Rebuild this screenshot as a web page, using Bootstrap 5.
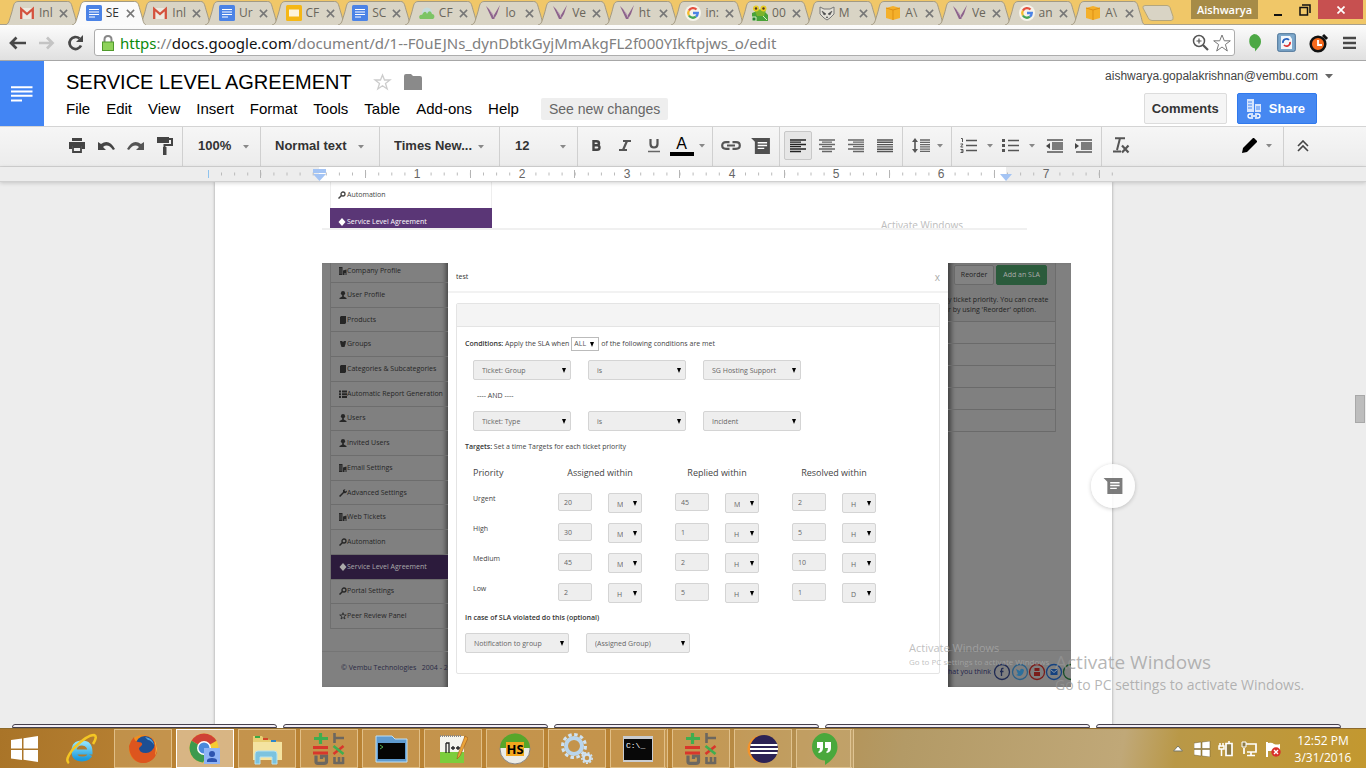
<!DOCTYPE html>
<html lang="en">
<head>
<meta charset="utf-8">
<meta name="viewport" content="width=device-width, initial-scale=1">
<title>SERVICE LEVEL AGREEMENT - Google Docs</title>
<link href="https://cdn.jsdelivr.net/npm/bootstrap@5.3.0/dist/css/bootstrap.min.css" rel="stylesheet">
<style>
:root{--ui:"Liberation Sans",Arial,sans-serif;--seg:"Open Sans","Noto Sans",sans-serif}
body{font-family:var(--ui);font-size:13px;line-height:1.2;color:#000;background:#ededed;height:100vh;overflow:hidden}
button,select,input{font:inherit;color:inherit}
.bare{border:0;background:none;padding:0;line-height:1;display:inline-flex;align-items:center;justify-content:center}
svg{display:block;flex:none}

/* browser tabs */
.tabstrip{height:25px;background:#f0c768;box-shadow:inset 0 -1px #a9a08a}
.tabs{padding-left:5px;min-width:0}
.btab{flex:1 1 0;min-width:0;height:24px;padding-left:14px;font-family:var(--seg);font-size:12px;color:#6a665b;margin-top:1px}
.btab .shape{position:absolute;left:0;top:0;width:calc(100% + 8px);height:24px;fill:#d9d4c5;stroke:#a39a83;stroke-width:1}
.btab.on{z-index:2;color:#333}
.btab.on .shape{fill:#fafafa}
.btab svg.fav,.btab .lbl,.btab .x{position:relative}
.btab .lbl{width:14px;margin-left:4px;overflow:hidden;white-space:nowrap;line-height:16px;text-align:left}
.btab .x{margin-left:6px}
.wctl{width:228px;padding-left:4px}
.who{background:#a68b47;color:#fff;font-family:var(--seg);font-size:11px;font-weight:600;width:67px;height:19px;margin-left:17px}
.wbtn{width:30px;height:19px}
.wclose{width:45px;height:19px;background:#c75050}

/* address bar */
.addr{height:36px;background:linear-gradient(#fcfcfc,#e0e0e0);border-bottom:1px solid #a7a7a7;padding:0 9px 0 8px}
.omni{height:27px;background:#fff;border:1px solid #adadad;border-radius:3px;padding:0 3px 0 6px;min-width:0}
.url{font-family:"Noto Sans","Open Sans",sans-serif;font-size:15px;line-height:24px;color:#808080;white-space:nowrap;overflow:hidden;outline:0}
.url b{font-weight:400;color:#0b8a0b}.url i{font-style:normal;color:#111}

/* document header */
.dochead{height:65px;background:#fff}
.home{width:44px;background:#4285f4}
.doctitle{font-size:20px;line-height:24px;margin:0;font-weight:400}
.menu{gap:16px;font-size:15px;line-height:20px}
.menu a{color:#000;text-decoration:none}
.changes{background:#eee;color:#666;border-radius:2px;padding:1px 8px;font-size:14px;line-height:20px;margin-left:6px}
.acct{font-size:12px;line-height:16px;color:#444}
.gbtn{height:31px;font-size:13px;font-weight:700;border-radius:2px;padding:0 7px}
.gbtn.cm{background:#f5f5f5;border:1px solid #dcdcdc;color:#333}
.gbtn.sh{background:#4688f1;border:1px solid #3079ed;color:#fff;gap:7px}

/* editing toolbar */
.tools{height:41px;background:linear-gradient(#f6f6f6,#ececec);border-top:1px solid #d4d4d4;border-bottom:1px solid #d4d4d4}
.grp{border-right:1px solid #d0d0d0;height:39px;display:flex;align-items:center;gap:1px;padding-left:4px;padding-bottom:2px}
.tb{width:28px;height:29px;border-radius:2px}
.tb.act{background:#e6e6e6;border:1px solid #c8c8c8}
.tb.wide{width:41px;gap:6px}
.tsel{appearance:none;border:0;background:no-repeat right 11px top 17px/6px 4px url("data:image/svg+xml,%3Csvg xmlns='http://www.w3.org/2000/svg' viewBox='0 0 6 4'%3E%3Cpath fill='%23888' d='M0 0h6L3 3.500z'/%3E%3C/svg%3E");font-weight:700;color:#333;height:36px;width:100%;padding:0 20px 0 0}
.gsel{padding-left:15px}

/* ruler */
.rule{height:15px;background:#ededed;border-bottom:1px solid #d0d0d0;padding-right:39px;box-shadow:0 1px 4px rgba(0,0,0,.18);position:relative;z-index:3}
.rule text{font:12px var(--ui);fill:#666;text-anchor:middle}

/* canvas */
.canvas{background:#ededed;padding-right:39px;min-height:0;overflow:hidden}
.sheet{width:897px;max-width:100%;background:#fff;padding-left:107px;box-shadow:0 0 3px rgba(0,0,0,.35)}
.fig{font-family:var(--seg);font-size:7px;line-height:10px;color:#444}
.fig1{width:705px;height:48px;border-bottom:2px solid #f0f0f0;padding-left:8px;overflow:hidden}
.fig1 .nav1{width:162px;border:1px solid #eee;border-top:0}
.nav1 div{height:26px;padding-left:7px;gap:1px}
.nav1 .cur{background:#5a3676;color:#fff;margin:0 -1px;padding-left:8px;height:28px}
.mark1{color:#bdbdbd;font-size:10px;line-height:14px;right:64px;top:36px}
.fig2{width:749px;height:424px;margin-top:33px;background:#808080}
.side{width:126px;padding-left:8px;color:#262626;overflow:hidden;white-space:nowrap;box-shadow:inset -5px 0 5px -3px rgba(0,0,0,.5)}
.side ul{list-style:none;margin:0;padding:0;border-left:1px solid #6f6f6f;height:366px}
.side li{flex:1 1 0;border-bottom:1px solid #6d6d6d;display:flex;align-items:center;padding-left:8px}
.side li:first-child{flex:0 0 20px;padding-bottom:4px}
.side li.cur{background:#2c1b3c;color:#aaa}
.side .foot{margin:22px 0 0 -8px;border-top:1px solid #757575;padding:11px 0 0 19px;color:#2a2a44}
.dlg{width:500px;background:#fff}
.dlg header{height:30px;border-bottom:2px solid #f2f2f2;padding:0 8px;color:#333}
.box{margin:10px 8px 0;height:371px;border:1px solid #e4e4e4;border-radius:2px;white-space:nowrap}
.boxhead{height:23px;background:#f4f4f4;border-bottom:1px solid #e4e4e4}
.box .in{padding-left:8px}
.box b{font-weight:600;color:#333}
.dd,.num{border:1px solid #d4d4d4;border-radius:2px;background-color:#eee;color:#666;height:20px;font-size:7px;line-height:10px;padding:2px 8px 0;opacity:1}
.dd{appearance:none;background-repeat:no-repeat;background-position:right 4px top 7px;background-size:4px 5px;background-image:url("data:image/svg+xml,%3Csvg xmlns='http://www.w3.org/2000/svg' viewBox='0 0 4 5'%3E%3Cpath fill='%23000' d='M0 0h4L2 5z'/%3E%3C/svg%3E")}
.dd.s1{width:98px}.dd.s2{width:104px}
.dd.all{width:28px;height:14px;background-color:#fff;padding:0 2px;background-position:right 4px top 4px;color:#555;border-color:#bbb;border-radius:0}
.dd.unit{width:34px;padding:3px 18px 0 8px}
.num{width:34px;height:18px;padding:0 5px}
.tg{table-layout:fixed;width:436px;border-collapse:collapse;margin:15px 0 0 8px}
.tg th{font-weight:400;font-size:9px;line-height:12px;padding:0 33px 9px 0;text-align:center;color:#444}
.tg th:first-child{text-align:left;padding-right:0}
.tg td{padding:0;height:30px;vertical-align:middle}
.tg td:first-child{padding-bottom:9px}
.tg .pair{display:flex;gap:16px}
.rest{width:123px;overflow:hidden;color:#222;white-space:nowrap;box-shadow:inset 6px 0 5px -3px rgba(0,0,0,.5)}
.rt{width:108px;border-right:1px solid #6d6d6d}
.rt .hd{height:58px;padding-top:2px;background:rgba(0,0,0,.04)}
.rt .ln{height:22px;border-top:1px solid #6a6a6a}
.mb{font-size:7px;height:20px;border-radius:2px;padding:0 6px}
.social{margin-top:218px;border-top:1px solid #757575;padding:12px 0 0;gap:1px;color:#22224a}
.wm{color:rgba(170,170,170,.75);left:587px;top:377px;font-size:11px;line-height:15px}
.wm small{display:block;font-size:8px;line-height:14px}

.bubble{width:44px;height:44px;border-radius:50%;background:rgba(255,255,255,.88);box-shadow:0 1px 4px rgba(0,0,0,.2);right:231px;top:282px}
.thumb{width:10px;height:28px;background:#bdbdbd;border:1px solid #a8a8a8;right:1px;top:213px}
.peeks{left:12px;right:25px;bottom:0;gap:6px}
.peeks div{flex:1 1 265px;height:4px;border:1px solid #45404c;border-radius:3px 3px 0 0;background:#f3eff6}
.peeks div:last-child{flex-basis:245px}
.actwin{right:56px;top:467px;width:255px;font-family:var(--seg);color:rgba(150,150,150,.7);font-size:19px;line-height:26px;white-space:nowrap;z-index:5}
.actwin span{display:block;font-size:14px;line-height:20px}

/* taskbar */
.task{height:40px;background:linear-gradient(100deg,#a97428 0,#b98234 12%,#b98334 48%,#b39a66 66%,#c0a878 82%,#b99847 86%,#c3982f 100%);border-top:1px solid #8d6a2c;gap:4px;font-family:var(--seg);color:#fff}
.app{width:58px;height:39px;background:rgba(225,195,145,.27);border:1px solid rgba(245,220,175,.6)}
.app.on{background:rgba(255,245,230,.45);border-color:#fff}
.app.stack{border-right:4px double rgba(245,220,175,.6)}
.clock{font-size:12px;line-height:17px;width:60px}
</style>
</head>
<body class="d-flex flex-column">
<svg width="0" height="0" class="position-absolute">
<defs>
<linearGradient id="fxg" x1="0" y1="0" x2="1" y2="1"><stop offset="0" stop-color="#f8a01c"/><stop offset="1" stop-color="#d8431d"/></linearGradient>
<linearGradient id="ieg" x1="0" y1="0" x2="0" y2="1"><stop offset="0" stop-color="#8be0fb"/><stop offset="1" stop-color="#1c9bdc"/></linearGradient>
</defs>
<symbol id="tab" viewBox="0 0 75 24" preserveAspectRatio="none"><path vector-effect="non-scaling-stroke" d="M0 24C4 23 4 20 6 14C9 5 8 1 13 .5H63C67 .5 67 5 69 11C72 20 71 23 75 24"/></symbol>
<symbol id="x" viewBox="0 0 10 10"><path d="M1 1l8 8M9 1L1 9" stroke="#777" stroke-width="1.700"/></symbol>
<symbol id="f-gm" viewBox="0 0 16 16"><path d="M1 3h14v11H1z" fill="#ede9df"/><path d="M2.200 14V4L8 9l5.800-5v10" fill="none" stroke="#d4523d" stroke-width="2.300"/></symbol>
<symbol id="f-doc" viewBox="0 0 16 16"><rect width="16" height="16" rx="1.500" fill="#4b83e6"/><path d="M3 4.500h10M3 7h10M3 9.500h10M3 12h6" stroke="#fff" stroke-width="1.200"/></symbol>
<symbol id="f-sl" viewBox="0 0 16 16"><rect width="16" height="16" rx="1.500" fill="#f5b715"/><path d="M3 4.500h10v7H3z" fill="#fdf4dc"/></symbol>
<symbol id="f-an" viewBox="0 0 16 16"><ellipse cx="8" cy="8" rx="5" ry="5.500" fill="#c5dcdc"/><path d="M1 14c-2-2 0-5 2-4 2-4 4-4 5-1 2-4 4-3 5 0 3 0 3 4 1 5z" fill="#7cc464"/></symbol>
<symbol id="f-v" viewBox="0 0 16 16"><path d="M1 1l6 13h3L4 4zM9 10L15 0l-3 9-3 5z" fill="#8d638c"/><path d="M4 4l4 5 2 5z" fill="#b89ab5"/></symbol>
<symbol id="f-g" viewBox="0 0 16 16"><circle cx="8" cy="8" r="8" fill="#f6f3ea"/><g fill="none" stroke-width="2.300"><path d="M11.500 4.500A4.800 4.800 0 0 0 3.900 5.600" stroke="#e5503f"/><path d="M3.900 5.600a4.800 4.800 0 0 0 0 4.900" stroke="#f5bb2a"/><path d="M3.900 10.500a4.800 4.800 0 0 0 7 1.200" stroke="#43a556"/><path d="M10.900 11.700A4.800 4.800 0 0 0 12.800 8H8" stroke="#4b83e6"/></g></symbol>
<symbol id="f-fr" viewBox="0 0 16 16"><path d="M0 8l5-2h7l4 4v6H0z" fill="#49a339"/><path d="M2 4l12 1-2 6H5z" fill="#7db32c"/><circle cx="4" cy="3.500" r="3" fill="#e7cd25"/><circle cx="11.500" cy="3.500" r="3" fill="#e7cd25"/><circle cx="4" cy="3.500" r="1.200" fill="#532"/><circle cx="11.500" cy="3.500" r="1.200" fill="#532"/><path d="M0 12h4v4H0zM11 11l4 4" fill="#267f32" stroke="#d8eec4"/></symbol>
<symbol id="f-rc" viewBox="0 0 16 16"><path d="M1 2l4 2h6l4-2v7l-4 4-3 2-3-2-4-4z" fill="#e4e1d8" stroke="#777"/><path d="M3 6l4 3-2 1zM13 6L9 9l2 1zM7 12h2l-1 1z" fill="#444" stroke="#555" stroke-width=".6"/></symbol>
<symbol id="f-aw" viewBox="0 0 16 16"><path d="M1 3l7-2 7 2v10l-7 2-7-2z" fill="#f4b02b"/><path d="M1 3l7 2 7-2M8 5v10" stroke="#dd8f14" fill="none"/></symbol>
<symbol id="dn" viewBox="0 0 6 4"><path d="M0 0h6L3 3.500z" fill="#888"/></symbol>
<symbol id="cmt" viewBox="0 0 20 17"><path d="M0 0h20v17H4V4z" fill="#505050"/><path d="M7 5h10M7 8h10M7 11h7" stroke="#fff" stroke-width="1.500"/></symbol>
<symbol id="bld" viewBox="0 0 8 8"><path d="M0 0h3.500v8H0zM4 3.500l3.500-1V8H6.500V6H5.500v2H4z" fill="currentColor"/><path d="M0 2h3M0 4h3M0 6h3" stroke="#808080" stroke-width=".5"/></symbol>
<symbol id="usr" viewBox="0 0 8 8"><circle cx="4" cy="2.200" r="2.100" fill="currentColor"/><path d="M3.200 4h1.600v1.500L7.500 7v1h-7V7l2.700-1.500z" fill="currentColor"/></symbol>
<symbol id="bok" viewBox="0 0 8 8"><path d="M1 1l1-1h5v7L6 8H1z" fill="currentColor"/></symbol>
<symbol id="grpi" viewBox="0 0 8 8"><path d="M1 1h2l1 1 1-1h2l-.5 3L5.500 7h-3L1.500 4z" fill="currentColor"/></symbol>
<symbol id="lst" viewBox="0 0 8 8"><path d="M0 .500h2v2H0zM3 .500h5v2H3zM0 3.200h2v2H0zM3 3.200h5v2H3zM0 6h2v2H0zM3 6h5v2H3z" fill="currentColor"/></symbol>
<symbol id="wr" viewBox="0 0 8 8"><path d="M0 7l4-4V1L6.500 0 5.500 1.500l1 1L8 1.500C8 4 6.500 4.600 5 4L1.200 8z" fill="currentColor"/></symbol>
<symbol id="key" viewBox="0 0 8 8"><circle cx="5" cy="3" r="2" fill="none" stroke="currentColor" stroke-width="1.300"/><path d="M3.500 4.500L.5 7.500" stroke="currentColor" stroke-width="1.500"/></symbol>
<symbol id="dia" viewBox="0 0 8 8"><path d="M4 0l3.500 4L4 8 .5 4z" fill="currentColor"/></symbol>
<symbol id="str" viewBox="0 0 8 8"><path d="M4 .7l.8 2.300h2.500L5.300 4.500 6 7 4 5.500 2 7l.7-2.500L.7 3h2.500z" fill="none" stroke="currentColor" stroke-width=".8"/></symbol>
<symbol id="gitx" viewBox="0 0 32 32"><g fill="none" stroke-width="3.200"><path d="M3 22.500v6q0 1.800 2 1.800h6q2.500 0 2.500-1.800v-5.500H8.500v3" stroke="#6c675f"/><path d="M0 20h15M0 14.500h15" stroke="#d9362b"/><path d="M7.500 0v11M1 5.500h14" stroke="#3fae4f"/></g><g fill="none" stroke-width="2.600"><path d="M21.500 31V24M21.500 30h9M26 30v-6M30 31v-7" stroke="#6c675f"/><path d="M20.500 21l10-8" stroke="#d9362b"/><path d="M20.500 13l10 8" stroke="#3fae4f"/><path d="M21.500 0v10M21 5h10" stroke="#6c675f"/></g></symbol>
</svg>

<div class="tabstrip d-flex">
  <div class="tabs d-flex flex-fill" role="tablist">
    <button class="btab bare justify-content-start position-relative" role="tab"><svg class="shape"><use href="#tab"/></svg><svg class="fav" width="16" height="16"><use href="#f-gm"/></svg><span class="lbl">Inl</span><svg class="x" width="9" height="9"><use href="#x"/></svg></button>
    <button class="btab on bare justify-content-start position-relative" role="tab"><svg class="shape"><use href="#tab"/></svg><svg class="fav" width="16" height="16"><use href="#f-doc"/></svg><span class="lbl">SE</span><svg class="x" width="9" height="9"><use href="#x"/></svg></button>
    <button class="btab bare justify-content-start position-relative" role="tab"><svg class="shape"><use href="#tab"/></svg><svg class="fav" width="16" height="16"><use href="#f-gm"/></svg><span class="lbl">Inl</span><svg class="x" width="9" height="9"><use href="#x"/></svg></button>
    <button class="btab bare justify-content-start position-relative" role="tab"><svg class="shape"><use href="#tab"/></svg><svg class="fav" width="16" height="16"><use href="#f-doc"/></svg><span class="lbl">Ur</span><svg class="x" width="9" height="9"><use href="#x"/></svg></button>
    <button class="btab bare justify-content-start position-relative" role="tab"><svg class="shape"><use href="#tab"/></svg><svg class="fav" width="16" height="16"><use href="#f-sl"/></svg><span class="lbl">CF</span><svg class="x" width="9" height="9"><use href="#x"/></svg></button>
    <button class="btab bare justify-content-start position-relative" role="tab"><svg class="shape"><use href="#tab"/></svg><svg class="fav" width="16" height="16"><use href="#f-doc"/></svg><span class="lbl">SC</span><svg class="x" width="9" height="9"><use href="#x"/></svg></button>
    <button class="btab bare justify-content-start position-relative" role="tab"><svg class="shape"><use href="#tab"/></svg><svg class="fav" width="16" height="16"><use href="#f-an"/></svg><span class="lbl">CF</span><svg class="x" width="9" height="9"><use href="#x"/></svg></button>
    <button class="btab bare justify-content-start position-relative" role="tab"><svg class="shape"><use href="#tab"/></svg><svg class="fav" width="16" height="16"><use href="#f-v"/></svg><span class="lbl">lo</span><svg class="x" width="9" height="9"><use href="#x"/></svg></button>
    <button class="btab bare justify-content-start position-relative" role="tab"><svg class="shape"><use href="#tab"/></svg><svg class="fav" width="16" height="16"><use href="#f-v"/></svg><span class="lbl">Ve</span><svg class="x" width="9" height="9"><use href="#x"/></svg></button>
    <button class="btab bare justify-content-start position-relative" role="tab"><svg class="shape"><use href="#tab"/></svg><svg class="fav" width="16" height="16"><use href="#f-v"/></svg><span class="lbl">ht</span><svg class="x" width="9" height="9"><use href="#x"/></svg></button>
    <button class="btab bare justify-content-start position-relative" role="tab"><svg class="shape"><use href="#tab"/></svg><svg class="fav" width="16" height="16"><use href="#f-g"/></svg><span class="lbl">in:</span><svg class="x" width="9" height="9"><use href="#x"/></svg></button>
    <button class="btab bare justify-content-start position-relative" role="tab"><svg class="shape"><use href="#tab"/></svg><svg class="fav" width="16" height="16"><use href="#f-fr"/></svg><span class="lbl">00</span><svg class="x" width="9" height="9"><use href="#x"/></svg></button>
    <button class="btab bare justify-content-start position-relative" role="tab"><svg class="shape"><use href="#tab"/></svg><svg class="fav" width="16" height="16"><use href="#f-rc"/></svg><span class="lbl">M</span><svg class="x" width="9" height="9"><use href="#x"/></svg></button>
    <button class="btab bare justify-content-start position-relative" role="tab"><svg class="shape"><use href="#tab"/></svg><svg class="fav" width="16" height="16"><use href="#f-aw"/></svg><span class="lbl">A\</span><svg class="x" width="9" height="9"><use href="#x"/></svg></button>
    <button class="btab bare justify-content-start position-relative" role="tab"><svg class="shape"><use href="#tab"/></svg><svg class="fav" width="16" height="16"><use href="#f-v"/></svg><span class="lbl">Ve</span><svg class="x" width="9" height="9"><use href="#x"/></svg></button>
    <button class="btab bare justify-content-start position-relative" role="tab"><svg class="shape"><use href="#tab"/></svg><svg class="fav" width="16" height="16"><use href="#f-g"/></svg><span class="lbl">an</span><svg class="x" width="9" height="9"><use href="#x"/></svg></button>
    <button class="btab bare justify-content-start position-relative" role="tab"><svg class="shape"><use href="#tab"/></svg><svg class="fav" width="16" height="16"><use href="#f-aw"/></svg><span class="lbl">A\</span><svg class="x" width="9" height="9"><use href="#x"/></svg></button>
  </div>
  <div class="wctl d-flex flex-shrink-0">
    <button class="bare align-self-center" aria-label="New tab"><svg width="32" height="16"><path d="M3 .5h22q2 0 3 2l3 9q1 4-2 4H10q-3 0-4-3L1 3q-1-2 2-2.500z" fill="#d9d4c5" stroke="#b3a67e"/></svg></button>
    <button class="who bare">Aishwarya</button>
    <button class="wbtn bare ms-1" aria-label="Minimize"><svg width="12" height="12"><path d="M3 11h8" stroke="#111" stroke-width="2"/></svg></button>
    <button class="wbtn bare" style="width:26px" aria-label="Restore"><svg width="12" height="12"><path d="M1 3.500h7.500V11H1z M3 1h8v8" fill="none" stroke="#111" stroke-width="1.500"/></svg></button>
    <button class="wclose bare" aria-label="Close"><svg width="8" height="8"><path d="M.5.5l7 7M7.500.5l-7 7" stroke="#fff" stroke-width="1.700"/></svg></button>
  </div>
</div>

<div class="addr d-flex align-items-center">
  <button class="bare" aria-label="Back"><svg width="20" height="16"><path d="M3 8h15M8.500 2.500L3 8l5.500 5.500" fill="none" stroke="#484848" stroke-width="2.700"/></svg></button>
  <button class="bare" style="margin-left:10px" aria-label="Forward"><svg width="18" height="16"><path d="M1 8h13M9 2.500L14.500 8 9 13.500" fill="none" stroke="#c4c4c4" stroke-width="2.700"/></svg></button>
  <button class="bare me-2 ms-2" aria-label="Reload"><svg width="22" height="18"><path d="M17 11.500A6 6 0 1 1 15.500 4.500" fill="none" stroke="#484848" stroke-width="2.700"/><path d="M19 1v7h-7z" fill="#484848"/></svg></button>
  <div class="omni d-flex align-items-center flex-fill">
    <svg style="margin-right:5px" width="14" height="16"><path d="M3.500 8V4.500q0-3.500 3.500-3.500t3.500 3.500V8" fill="none" stroke="#888" stroke-width="2"/><rect x="1.500" y="7" width="11" height="8.500" fill="#8fd25b" stroke="#4f9a2b"/></svg>
    <div class="url flex-fill" role="textbox" contenteditable="true" spellcheck="false" aria-label="Address"><b>https</b>://<i>docs.google.com</i>/document/d/1--F0uEJNs_dynDbtkGyjMmAkgFL2f000YIkftpjws_o/edit</div>
    <svg width="17" height="17"><circle cx="7" cy="7" r="5.500" fill="none" stroke="#555" stroke-width="1.500"/><path d="M4.500 7h5M7 4.500v5" stroke="#555" stroke-width="1.200"/><path d="M11 11l5 5" stroke="#555" stroke-width="2.200"/></svg>
    <svg class="ms-1" width="18" height="18" viewBox="0 0 18 18"><path d="M9 1l2.300 5.800h6L12.400 10.500 14.300 17 9 13l-5.300 4 1.900-6.500L.7 6.800h6z" fill="#fff" stroke="#777"/></svg>
  </div>
  <svg class="ms-2" style="margin-right:12px" width="22" height="20"><path d="M11 1a7 7.500 0 0 1 7 7.500c0 5-4 7-6 10v-3a7 7.500 0 0 1-1-14.500z" fill="#4da845"/></svg>
  <svg width="19" height="19"><rect x=".7" y=".7" width="17.600" height="17.600" rx="1.500" fill="#7fa9cc" stroke="#456f95"/><path d="M4 3h9l2 3v10H4z" fill="#f4f8fc"/><path d="M6 10a3.500 3.500 0 0 1 6-3" fill="none" stroke="#2862bd" stroke-width="1.800"/><path d="M13 9a3.500 3.500 0 0 1-6 3" fill="none" stroke="#d33" stroke-width="1.800"/></svg>
  <svg style="margin-left:13px" width="20" height="20"><circle cx="9" cy="11" r="7.300" fill="#f6691d" stroke="#111" stroke-width="2.500"/><path d="M9 7v5h4" fill="none" stroke="#fff" stroke-width="1.800"/><path d="M14 2l4 4" stroke="#111" stroke-width="3"/></svg>
  <button class="bare" style="margin-left:14px" aria-label="Menu"><svg width="14" height="13"><path d="M0 2h13M0 7h13M0 12h13" stroke="#484848" stroke-width="2.700"/></svg></button>
</div>

<header class="dochead d-flex">
  <a class="home d-flex align-items-center justify-content-center" href="#" aria-label="Docs home"><svg width="22" height="16"><path d="M0 1.200h21.500M0 5.400h21.500M0 9.800h21.500M0 14.500h11" stroke="#fff" stroke-width="2"/></svg></a>
  <div class="flex-fill" style="padding:9px 0 0 22px">
    <div class="d-flex align-items-center">
      <h1 class="doctitle">SERVICE LEVEL AGREEMENT</h1>
      <button class="bare" style="margin-left:21px" aria-label="Star"><svg width="19" height="18" viewBox="0 0 18 18"><path d="M9 2l2 5h5.500L12 10.500l1.700 5.500L9 12.700 4.300 16 6 10.500 1.500 7H7z" fill="none" stroke="#ccc" stroke-width="1.300"/></svg></button>
      <button class="bare" style="margin-left:12px" aria-label="Move"><svg width="18" height="16"><path d="M0 2q0-2 2-2h5l2 2h7q2 0 2 2v12H0z" fill="#8a8a8a"/></svg></button>
    </div>
    <nav class="menu d-flex align-items-center" style="padding-top:4px">
      <a href="#">File</a><a href="#">Edit</a><a href="#">View</a><a href="#">Insert</a><a href="#">Format</a><a href="#">Tools</a><a href="#">Table</a><a href="#">Add-ons</a><a href="#">Help</a><button class="changes border-0">See new changes</button>
    </nav>
  </div>
  <div class="d-flex flex-column align-items-end" style="padding:7px 33px 0 0">
    <button class="acct bare">aishwarya.gopalakrishnan@vembu.com<svg style="margin-left:7px" width="8" height="5"><path d="M0 0h8L4 4.500z" fill="#666"/></svg></button>
    <div class="d-flex" style="gap:10px;padding:9px 16px 0 0">
      <button class="gbtn cm">Comments</button>
      <button class="gbtn sh d-flex align-items-center" style="padding:0 11px 0 8px"><svg width="16" height="20"><path d="M1 0h7v13H1zM9 5h6v8H9z" fill="#d7e5fd"/><path d="M2 3h4M2 6h4M2 9h4M11 7v4M13 7v4" stroke="#4688f1"/><path d="M7 15H4q-2 0-2 2t2 2h3M9 15h3q2 0 2 2t-2 2H9M5 17h6" fill="none" stroke="#fff" stroke-width="1.300"/></svg>Share</button>
    </div>
  </div>
</header>

<div class="tools d-flex" role="toolbar">
  <div class="grp" style="padding-left:63px;width:183px">
    <button class="tb bare" aria-label="Print"><svg width="16" height="15"><path d="M3 0h10v3H3zM0 4h16v7h-3V8H3v3H0z" fill="#444"/><path d="M4 9h8v5H4z" fill="none" stroke="#444" stroke-width="1.800"/></svg></button>
    <button class="tb bare" aria-label="Undo"><svg width="17" height="11"><path d="M0 2v8h8L5 7q5-4 10 3l2-1Q11-2 3 4z" fill="#444"/></svg></button>
    <button class="tb bare" aria-label="Redo"><svg width="17" height="11"><path d="M17 2v8H9l3-3q-5-4-10 3L0 9Q6-2 14 4z" fill="#555"/></svg></button>
    <button class="tb bare" aria-label="Paint format"><svg width="17" height="18"><path d="M1 0h12v6H1z" fill="#444"/><path d="M13 2h3v6H8.500v9" fill="none" stroke="#444" stroke-width="2"/><path d="M7 10h3.500v8H7z" fill="#444"/></svg></button>
  </div>
  <div class="grp gsel" style="width:78px"><select class="tsel" aria-label="Zoom"><option>100%</option></select></div>
  <div class="grp gsel" style="width:119px;padding-left:14px"><select class="tsel" style="background-position:right 15px top 17px" aria-label="Styles"><option>Normal text</option></select></div>
  <div class="grp gsel" style="width:120px;padding-left:14px"><select class="tsel" style="background-position:right 15px top 17px" aria-label="Font"><option>Times New...</option></select></div>
  <div class="grp gsel" style="width:78px"><select class="tsel" aria-label="Font size"><option>12</option></select></div>
  <div class="grp" style="width:135px">
    <button class="tb bare" aria-label="Bold"><svg width="10" height="11"><path d="M2.500 1.200h3q2.500 0 2.500 2t-2.500 2h-3zM2.500 5.200H6q2.500 0 2.500 2.300T6 9.800H2.500z" fill="none" stroke="#444" stroke-width="2.400"/></svg></button>
    <button class="tb bare" aria-label="Italic"><svg width="12" height="11"><path d="M4 1h8M0 10h8M8 1L4 10" stroke="#555" stroke-width="2.200"/></svg></button>
    <button class="tb bare" aria-label="Underline"><svg width="12" height="14"><path d="M2.500 0v5q0 3.500 3.500 3.500T9.500 5V0" fill="none" stroke="#555" stroke-width="2.200"/><path d="M0 12.500h12" stroke="#666" stroke-width="1.500"/></svg></button>
    <button class="tb bare wide" style="width:36px;gap:5px" aria-label="Text color"><span class="d-flex flex-column align-items-center" style="font-size:16px;line-height:16px">A<svg width="24" height="4"><path d="M0 0h24v4H0z"/></svg></span><svg width="6" height="4"><use href="#dn"/></svg></button>
  </div>
  <div class="grp" style="width:67px">
    <button class="tb bare" aria-label="Link"><svg width="20" height="9"><path d="M8.500 1.200H5Q1.200 1.200 1.200 4.500T5 7.800h3.500M11.500 1.200H15q3.800 0 3.800 3.300T15 7.800h-3.500M6 4.500h8" fill="none" stroke="#555" stroke-width="2.200"/></svg></button>
    <button class="tb bare" aria-label="Comment"><svg width="19" height="16"><use href="#cmt"/></svg></button>
  </div>
  <div class="grp" style="width:123px">
    <button class="tb bare act" aria-label="Left"><svg width="16" height="14"><path d="M0 1h16M0 5.500h16M0 10h16M0 3.200h11M0 7.700h11M0 12.500h11" stroke="#222" stroke-width="1.300"/></svg></button>
    <button class="tb bare" aria-label="Center"><svg width="16" height="14"><path d="M0 1h16M0 5.500h16M0 10h16M3 3.200h10M3 7.700h10M3 12.500h10" stroke="#666" stroke-width="1.300"/></svg></button>
    <button class="tb bare" aria-label="Right"><svg width="16" height="14"><path d="M0 1h16M0 5.500h16M0 10h16M5 3.200h11M5 7.700h11M5 12.500h11" stroke="#666" stroke-width="1.300"/></svg></button>
    <button class="tb bare" aria-label="Justify"><svg width="16" height="14"><path d="M0 1h16M0 3.300h16M0 5.600h16M0 7.900h16M0 10.200h16M0 12.500h16" stroke="#555" stroke-width="1.400"/></svg></button>
  </div>
  <div class="grp" style="width:49px"><button class="tb bare wide" aria-label="Line spacing"><svg width="19" height="15"><path d="M3 2v11" stroke="#555" stroke-width="1.600"/><path d="M3 0l3 4H0zM3 15l3-4H0z" fill="#555"/><path d="M8 2h10M8 4.300h10M8 6.600h10M8 8.900h10M8 11.200h10M8 13.300h10" stroke="#666" stroke-width="1.300"/></svg><svg width="6" height="4"><use href="#dn"/></svg></button></div>
  <div class="grp" style="width:150px">
    <button class="tb bare wide" style="gap:10px" aria-label="Numbered list"><svg width="17" height="15"><path d="M6 2.500h11M6 7.500h11M6 12.500h11" stroke="#555" stroke-width="1.500"/><path d="M1 .500h1.500V4M.5 6H3L.7 9H3.200M.5 11.500H3v3H.5M1 13h2" fill="none" stroke="#555"/></svg><svg width="6" height="4"><use href="#dn"/></svg></button>
    <button class="tb bare wide" style="gap:10px" aria-label="Bulleted list"><svg width="17" height="15"><path d="M6 2.500h11M6 7.500h11M6 12.500h11" stroke="#555" stroke-width="1.500"/><path d="M0 1h3v3H0zM0 6h3v3H0zM0 11h3v3H0z" fill="#555"/></svg><svg width="6" height="4"><use href="#dn"/></svg></button>
    <button class="tb bare" aria-label="Decrease indent"><svg width="17" height="14"><path d="M1 1h16M6 4h11M6 6h11M6 8h11M6 10h11M1 13h16" stroke="#555" stroke-width="1.300"/><path d="M4 4v6L0 7z" fill="#444"/></svg></button>
    <button class="tb bare" aria-label="Increase indent"><svg width="17" height="14"><path d="M1 1h16M6 4h11M6 6h11M6 8h11M6 10h11M1 13h16" stroke="#555" stroke-width="1.300"/><path d="M0 4v6l4-3z" fill="#444"/></svg></button>
  </div>
  <div class="grp border-0" style="padding-left:5px"><button class="tb bare" aria-label="Clear formatting"><svg width="18" height="17"><path d="M3 1.200h10M8 1.200L5 13M1 14.500h8" stroke="#555" stroke-width="2"/><path d="M10 8.500l6.500 7M16.500 8.500l-6.500 7" stroke="#555" stroke-width="2.200"/></svg></button></div>
  <div class="grp ms-auto" style="width:52px"><button class="tb bare wide" style="gap:9px" aria-label="Mode"><svg width="15" height="15"><path d="M0 15l1-5L11 0h1l3 3v1L5 14z"/></svg><svg width="6" height="4"><use href="#dn"/></svg></button></div>
  <div class="grp border-0" style="width:82px;padding-left:5px"><button class="tb bare" aria-label="Hide menus"><svg width="12" height="12"><path d="M1 6l5-5 5 5M1 11l5-5 5 5" fill="none" stroke="#444" stroke-width="1.600"/></svg></button></div>
</div>

<div class="rule d-flex justify-content-center">
  <svg width="911" height="14" viewBox="0 0 911 14">
    <path d="M111 0h687v14H111z" fill="#fff"/>
    <path d="M0.500 3v8" stroke="#8fc3ee"/>
    <path d="M13 7h900" stroke="#bbb" stroke-width="3" stroke-dasharray="1 12.100"/>
    <path d="M52.500 3v8M157.500 3v8M262.500 3v8M366.500 3v8M471.500 3v8M576.500 3v8M681.500 3v8M786.500 3v8M891.500 3v8" stroke="#b5b5b5"/>
    <g><path d="M203 1h12v12h-12zM308 1h12v12h-12zM413 1h12v12h-12zM518 1h12v12h-12zM623 1h12v12h-12zM727 1h12v12h-12z" fill="#fff"/><path d="M832 1h12v12h-12z" fill="#ededed"/><text x="209" y="11">1</text><text x="314" y="11">2</text><text x="419" y="11">3</text><text x="524" y="11">4</text><text x="628" y="11">5</text><text x="733" y="11">6</text><text x="838" y="11">7</text></g>
    <path d="M105 2h13v4h-13zM105 7h13l-6.500 7z" fill="#a4c4f4"/><path d="M792 7h12l-6 7z" fill="#a4c4f4"/>
  </svg>
</div>

<main class="canvas position-relative d-flex justify-content-center flex-fill">
  <article class="sheet">
    <div class="fig fig1 position-relative">
      <div class="nav1"><div class="d-flex align-items-center"><svg width="8" height="8"><use href="#key"/></svg>Automation</div><div class="cur d-flex align-items-center"><svg width="8" height="8"><use href="#dia"/></svg>Service Level Agreement</div></div>
      <span class="mark1 position-absolute">Activate Windows</span>
    </div>
    <div class="fig fig2 d-flex position-relative">
      <div class="side">
        <ul class="d-flex flex-column">
          <li><svg width="8" height="8"><use href="#bld"/></svg>Company Profile</li>
          <li><svg width="8" height="8"><use href="#usr"/></svg>User Profile</li>
          <li><svg width="8" height="8"><use href="#bok"/></svg>Products</li>
          <li><svg width="8" height="8"><use href="#grpi"/></svg>Groups</li>
          <li><svg width="8" height="8"><use href="#bok"/></svg>Categories &amp; Subcategories</li>
          <li><svg width="8" height="8"><use href="#lst"/></svg>Automatic Report Generation</li>
          <li><svg width="8" height="8"><use href="#usr"/></svg>Users</li>
          <li><svg width="8" height="8"><use href="#usr"/></svg>Invited Users</li>
          <li><svg width="8" height="8"><use href="#bld"/></svg>Email Settings</li>
          <li><svg width="8" height="8"><use href="#wr"/></svg>Advanced Settings</li>
          <li><svg width="8" height="8"><use href="#bld"/></svg>Web Tickets</li>
          <li><svg width="8" height="8"><use href="#key"/></svg>Automation</li>
          <li class="cur"><svg width="8" height="8"><use href="#dia"/></svg>Service Level Agreement</li>
          <li><svg width="8" height="8"><use href="#key"/></svg>Portal Settings</li>
          <li><svg width="8" height="8"><use href="#str"/></svg>Peer Review Panel</li>
        </ul>
        <div class="foot">© Vembu Technologies &nbsp; 2004 - 20</div>
      </div>
      <div class="dlg">
        <header class="d-flex align-items-center justify-content-between"><span>test</span><span style="color:#aaa;font-size:10px">x</span></header>
        <div class="box">
          <div class="boxhead"></div>
          <div class="in">
            <div class="d-flex align-items-center" style="gap:2px;padding-top:10px"><span><b>Conditions:</b> Apply the SLA when</span><select class="dd all" aria-label="Match"><option>ALL</option></select><span>of the following conditions are met</span></div>
            <div class="d-flex" style="gap:17px;padding:9px 0 0 8px"><select class="dd s1" disabled aria-label="Field"><option>Ticket: Group</option></select><select class="dd s1" disabled aria-label="Operator"><option>is</option></select><select class="dd s1" disabled aria-label="Value"><option>SG Hosting Support</option></select></div>
            <div style="padding:11px 0 10px 12px">---- AND ----</div>
            <div class="d-flex" style="gap:17px;padding-left:8px"><select class="dd s1" disabled aria-label="Field"><option>Ticket: Type</option></select><select class="dd s1" disabled aria-label="Operator"><option>is</option></select><select class="dd s1" disabled aria-label="Value"><option>Incident</option></select></div>
            <div style="padding-top:11px"><b>Targets:</b> Set a time Targets for each ticket priority</div>
            <table class="tg">
              <colgroup><col style="width:85px"><col style="width:117px"><col style="width:117px"><col style="width:117px"></colgroup>
              <thead><tr><th>Priority</th><th>Assigned within</th><th>Replied within</th><th>Resolved within</th></tr></thead>
              <tbody>
              <tr><td>Urgent</td><td><div class="pair"><input class="num" value="20" disabled aria-label="Urgent assigned"><select class="dd unit" disabled aria-label="Unit"><option>M</option></select></div></td><td><div class="pair"><input class="num" value="45" disabled aria-label="Urgent replied"><select class="dd unit" disabled aria-label="Unit"><option>M</option></select></div></td><td><div class="pair"><input class="num" value="2" disabled aria-label="Urgent resolved"><select class="dd unit" disabled aria-label="Unit"><option>H</option></select></div></td></tr>
              <tr><td>High</td><td><div class="pair"><input class="num" value="30" disabled aria-label="High assigned"><select class="dd unit" disabled aria-label="Unit"><option>M</option></select></div></td><td><div class="pair"><input class="num" value="1" disabled aria-label="High replied"><select class="dd unit" disabled aria-label="Unit"><option>H</option></select></div></td><td><div class="pair"><input class="num" value="5" disabled aria-label="High resolved"><select class="dd unit" disabled aria-label="Unit"><option>H</option></select></div></td></tr>
              <tr><td>Medium</td><td><div class="pair"><input class="num" value="45" disabled aria-label="Medium assigned"><select class="dd unit" disabled aria-label="Unit"><option>M</option></select></div></td><td><div class="pair"><input class="num" value="2" disabled aria-label="Medium replied"><select class="dd unit" disabled aria-label="Unit"><option>H</option></select></div></td><td><div class="pair"><input class="num" value="10" disabled aria-label="Medium resolved"><select class="dd unit" disabled aria-label="Unit"><option>H</option></select></div></td></tr>
              <tr><td>Low</td><td><div class="pair"><input class="num" value="2" disabled aria-label="Low assigned"><select class="dd unit" disabled aria-label="Unit"><option>H</option></select></div></td><td><div class="pair"><input class="num" value="5" disabled aria-label="Low replied"><select class="dd unit" disabled aria-label="Unit"><option>H</option></select></div></td><td><div class="pair"><input class="num" value="1" disabled aria-label="Low resolved"><select class="dd unit" disabled aria-label="Unit"><option>D</option></select></div></td></tr>
              </tbody>
            </table>
            <div style="padding-top:5px"><b>In case of SLA violated do this (optional)</b></div>
            <div class="d-flex" style="gap:17px;padding-top:10px"><select class="dd s2" disabled aria-label="Action"><option>Notification to group</option></select><select class="dd s2" disabled aria-label="Group"><option>(Assigned Group)</option></select></div>
          </div>
        </div>
      </div>
      <div class="rest">
        <div class="rt">
          <div class="hd">
            <div class="d-flex justify-content-end" style="gap:2px;padding-right:8px"><button class="mb" style="background:#828282;border:1px solid #6a6a6a">Reorder</button><button class="mb" style="background:#2b5b3c;border:1px solid #2b5b3c;color:#aaa">Add an SLA</button></div>
            <div style="padding-top:10px">y ticket priority. You can create<br>r by using 'Reorder' option.</div>
          </div>
          <div class="ln"></div><div class="ln"></div><div class="ln"></div><div class="ln"></div><div class="ln" style="height:23px;border-bottom:1px solid #6a6a6a"></div>
        </div>
        <div class="social d-flex align-items-center"><span>hat you think</span>
          <svg style="margin-left:1px" width="78" height="18" viewBox="0 0 78 18"><g fill="none" stroke-width="1.300"><circle cx="9" cy="9" r="7.500" stroke="#1f2a52"/><circle cx="27" cy="9" r="7.500" stroke="#2c5f86"/><circle cx="44" cy="9" r="7.500" stroke="#7a1d1a"/><circle cx="61" cy="9" r="7.500" stroke="#15417f"/><path d="M10.500 5.500q-2-.5-2 1.500v6M7 8.500h3.500" stroke="#1f2a52"/><circle cx="78" cy="9" r="7.500" stroke="#174d27"/></g><path d="M23 6l4 2q0-3 3-2l1 1q-1 6-5 6l-3-1 2-1z" fill="#2c6f9c"/><path d="M41 9h6v4h-6zM41.500 5h5v3h-5z" fill="#7a1d1a"/><path d="M57.500 6h7v6h-7z" fill="#15417f"/><path d="M57.500 6.500l3.500 3 3.500-3" fill="none" stroke="#8899aa"/></svg>
        </div>
      </div>
      <div class="wm position-absolute">Activate Windows<small>Go to PC settings to activate Windows</small></div>
    </div>
  </article>
  <button class="bubble bare position-absolute" aria-label="Add a comment"><svg width="20" height="16" opacity=".75"><use href="#cmt"/></svg></button>
  <div class="thumb position-absolute"></div>
  <div class="peeks d-flex position-absolute"><div></div><div></div><div></div><div></div><div></div></div>
  <div class="actwin position-absolute">Activate Windows<span>Go to PC settings to activate Windows.</span></div>
</main>

<footer class="task d-flex align-items-center">
  <button class="bare" style="width:50px" aria-label="Start"><svg width="28" height="26"><path d="M0 4l11-1.500v10H0zM12.500 2.300L27 0v12.500H12.500zM0 14h11v10L0 22.500zM12.500 14H27v12l-14.500-2.200z" fill="#fff"/></svg></button>
  <button class="bare" style="width:56px" aria-label="Internet Explorer"><svg width="32" height="32"><path d="M24 22q-2 4-8 4-8 0-8-8t8-8q8 0 8 9H9" fill="none" stroke="url(#ieg)" stroke-width="5"/><path d="M3 30Q-2 27 8 15 21 2 28 2q4 1-1 9" fill="none" stroke="#f4c623" stroke-width="2.500"/></svg></button>
  <button class="app bare" aria-label="Firefox"><svg width="30" height="30"><circle cx="15" cy="15" r="14" fill="url(#fxg)"/><circle cx="17" cy="11.500" r="9.500" fill="#1d4f93"/><path d="M17 3q8 1 9 8-3-5-6-5z" fill="#56a4dd"/><path d="M1 12Q3 6 6 3q0 4 4 5 5 0 4 3l-3 3q0 5 7 5 6 0 10-9 3 9-3 15-10 8-19 0-5-5-5-13z" fill="#dd551e"/><path d="M26 5q5 9 1 17 2-9-1-17z" fill="#f8d24a"/></svg></button>
  <button class="app on bare" aria-label="Chrome"><svg width="32" height="32"><circle cx="15" cy="15" r="14.500" fill="#f6cb33"/><path d="M15 15L2.500 7.700A14.500 14.500 0 0 1 27.500 7.700z" fill="#cf4236"/><path d="M15 15L2.500 7.700A14.500 14.500 0 0 0 14 29.500l5-9z" fill="#3c9a4e"/><circle cx="15" cy="15" r="7" fill="#fff"/><circle cx="15" cy="15" r="5.500" fill="#4a89dc"/><path d="M15 15h16v16H15z" fill="#8fb4f5"/><circle cx="23" cy="21" r="3" fill="#2c54b0"/><path d="M18 29v-2q1-2 5-2t5 2v2z" fill="#2c54b0"/></svg></button>
  <button class="app bare" aria-label="File Explorer"><svg width="32" height="32"><path d="M2 3h9l2 3 7 1 2 1 9 1v18H2z" fill="#e8cf73"/><path d="M2 9h29v18H2z" fill="#f4e3a0"/><path d="M4 3h5v2H4z" fill="#3aa845"/><path d="M12 5h5v2h-5z" fill="#d2472a"/><path d="M20 7h5v2h-5z" fill="#2f87c9"/><path d="M4 31V21q0-3 3-3h16q3 0 3 3v10h-5v-7H9v7z" fill="#7cc3df" stroke="#b5e2f0"/></svg></button>
  <button class="app bare" aria-label="Git Extensions"><svg width="32" height="32"><use href="#gitx"/></svg></button>
  <button class="app bare" aria-label="PuTTY"><svg width="33" height="28"><path d="M1 1h16l3 3h12v23H1z" fill="#5f9bd0" stroke="#bfe0f5"/><path d="M3 8h27v16H3z" fill="#050505"/><path d="M5 10l3 2-3 2" fill="none" stroke="#5a5"/></svg></button>
  <button class="app bare" aria-label="Notepad++"><svg width="30" height="32"><path d="M2 3h24v27H2z" fill="#f5f5ee"/><path d="M2 19h24v11H2z" fill="#7ccd3c"/><path d="M2 3h22" stroke="#888" stroke-width="2" stroke-dasharray="1 1"/><path d="M8 10v10M8 10h3v10M13 15h4M15 13v4M18 15h4M20 13v4" fill="none" stroke="#222" stroke-width="1.300"/><path d="M19 26l1-5L27 3l3 2-8 18z" fill="#eba338" stroke="#9a5b1d" stroke-width=".6"/></svg></button>
  <button class="app bare" aria-label="HeidiSQL"><svg width="32" height="32"><circle cx="16" cy="16" r="15" fill="#ecece6" stroke="#888"/><path d="M1 15a15 14.500 0 0 1 30 0z" fill="#58a62a"/><path d="M7 9h18v14H7z" fill="#f3a71e"/><text x="16" y="21" text-anchor="middle" font-family="Open Sans, sans-serif" font-size="13" font-weight="700">HS</text></svg></button>
  <button class="app bare" aria-label="Services"><svg width="32" height="32"><g fill="none" stroke="#d0e3f2"><circle cx="13" cy="13" r="8" stroke="#b9d5ec" stroke-width="4"/><circle cx="13" cy="13" r="11.500" stroke-width="3" stroke-dasharray="3.500 2.500"/><circle cx="26" cy="25" r="3.500" stroke-width="2.500"/><circle cx="26" cy="25" r="5.200" stroke-width="1.600" stroke-dasharray="2 1.500"/></g></svg></button>
  <button class="app stack bare" aria-label="Command Prompt"><svg width="30" height="26"><path d="M0 0h30v26H0z" fill="#c9ccd0"/><path d="M1 3h28v21H1z" fill="#080808"/><text x="3" y="12" font-family="Liberation Mono, monospace" font-size="8" fill="#fff">C:\_</text></svg></button>
  <button class="app bare" aria-label="Git Extensions"><svg width="32" height="32"><use href="#gitx"/></svg></button>
  <button class="app bare" aria-label="Eclipse"><svg width="32" height="30"><circle cx="14" cy="15" r="13.500" fill="#f5932a"/><circle cx="17" cy="15" r="14" fill="#2c2255"/><path d="M3.500 11h27M3 15h28M3.500 19h27" stroke="#fff" stroke-width="1.800"/></svg></button>
  <button class="app stack bare" aria-label="Hangouts"><svg width="28" height="32"><path d="M14 0a13.500 14 0 0 1 13.500 14C27.500 22 21 28 15 32v-4.500A13.500 13.800 0 0 1 14 0z" fill="#4aa83c"/><path d="M7 9h6v6q0 4-4 5l-1-1q2-1 2-4H7zM15 9h6v6q0 4-4 5l-1-1q2-1 2-4h-3z" fill="#fff"/></svg></button>
  <div class="ms-auto d-flex align-items-center" style="gap:7px;padding-right:13px">
    <svg width="10" height="6"><path d="M5 0l4.500 5h-9z" fill="#fff" stroke="#776"/></svg>
    <svg style="margin-left:4px" width="17" height="16"><path d="M0 2l7-1v6.500H0zM8 1l8-1v7.500H8zM0 8.500h7V15l-7-1zM8 8.500h8V16l-8-1z" fill="#fff" stroke="#6b5a2c" stroke-width=".5"/></svg>
    <svg width="16" height="16"><path d="M8 2.500h6v12H8z" fill="#8d7b45" stroke="#fff" stroke-width="1.700"/><path d="M10 1h2M1 5h5v3H1zM2 2v3M5 2v3M3.500 8v7" fill="none" stroke="#fff" stroke-width="1.500"/></svg>
    <svg width="17" height="16"><path d="M5 3h10v8H6M10 11v3M6 14.500h8M3 7v6" fill="none" stroke="#fff" stroke-width="1.700"/><path d="M1 1h4v5H1z" fill="#8d7b45" stroke="#fff"/></svg>
    <svg width="17" height="16"><path d="M2 1v15" stroke="#fff" stroke-width="2"/><path d="M3 2q4-1 6 1 3 1 6 0v7H3z" fill="#fff"/><circle cx="11" cy="11" r="4.700" fill="#d9302a"/><path d="M9 9l4 4M13 9l-4 4" stroke="#fff" stroke-width="1.400"/></svg>
    <div class="clock text-center" style="margin-left:4px">12:52 PM<br>3/31/2016</div>
  </div>
</footer>
<script src="https://cdn.jsdelivr.net/npm/bootstrap@5.3.0/dist/js/bootstrap.bundle.min.js"></script>
</body>
</html>
